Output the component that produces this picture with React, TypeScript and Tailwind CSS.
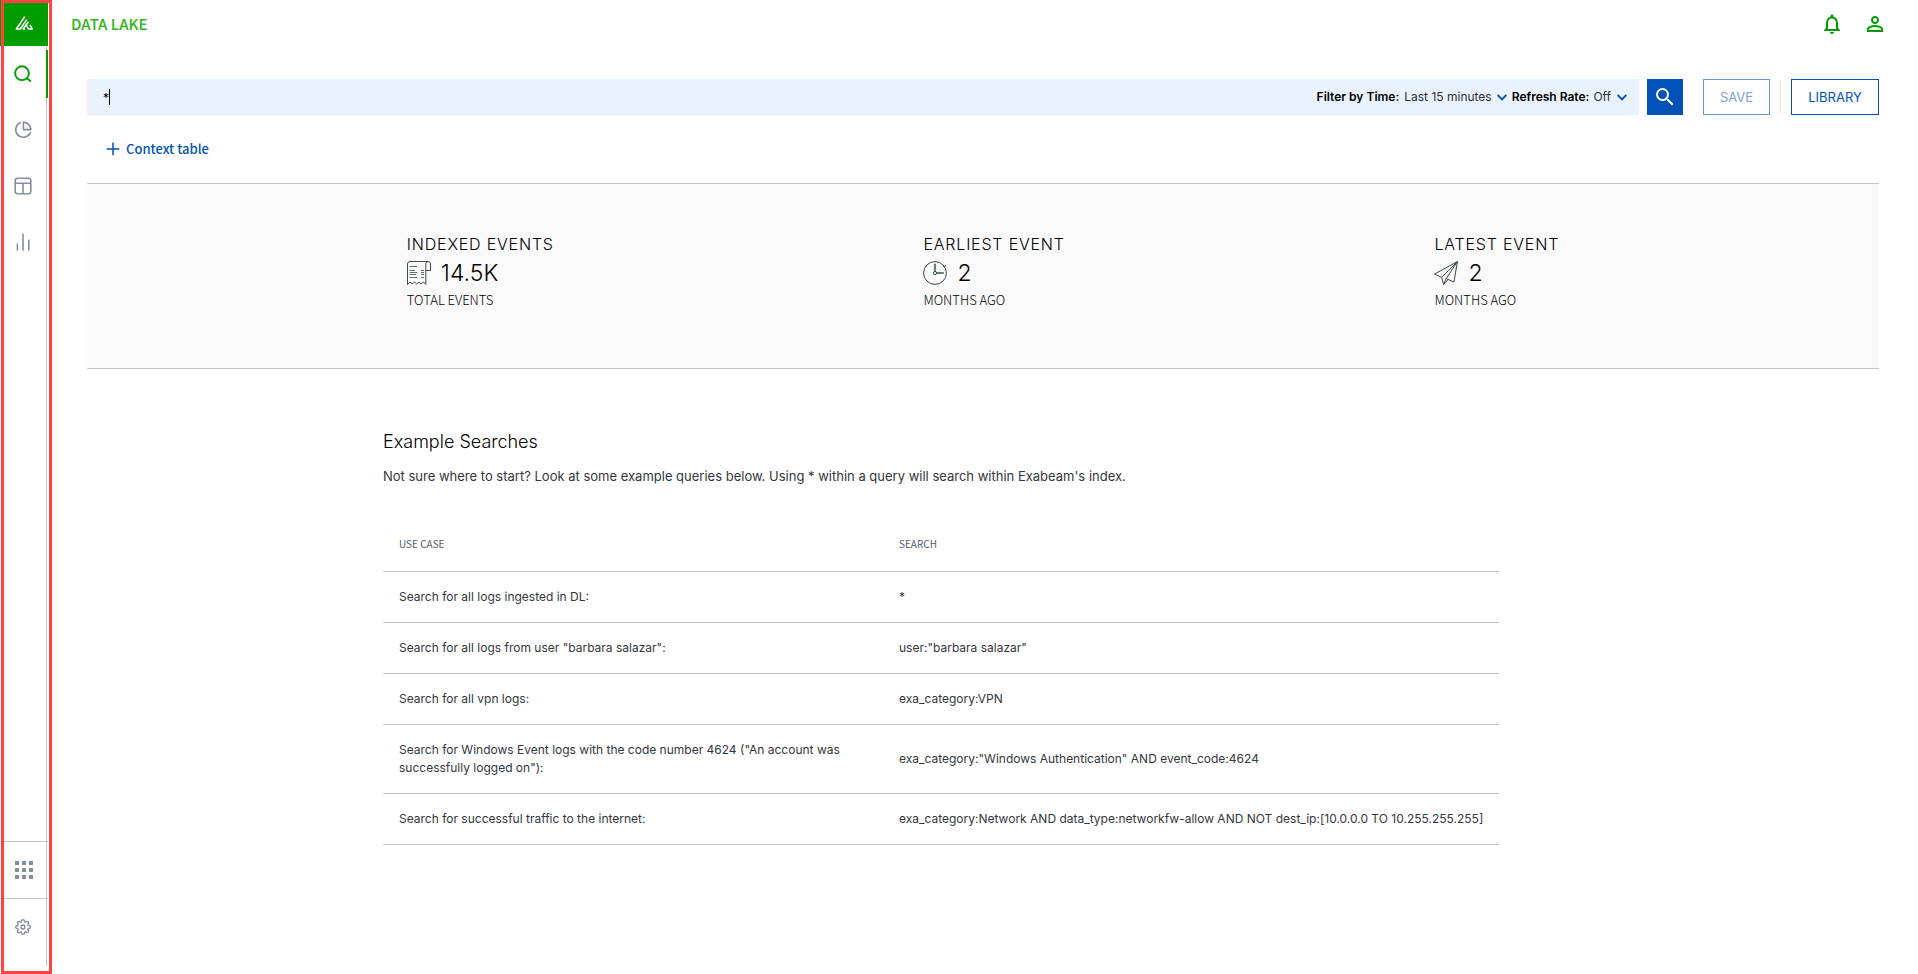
import React from 'react';
import { Plus } from 'lucide-react';
import { FiSettings } from 'react-icons/fi';
import { MdNotificationsNone, MdPersonOutline, MdSearch } from 'react-icons/md';

const LogoIcon = () => (
  <svg viewBox="0 0 18 14" className="w-[18px] h-[14px]" fill="none" stroke="#fff" strokeWidth="1.6" strokeLinejoin="round">
    <path d="M9.8 0.6 L1.4 13 H5.2 L11.8 3.6" />
    <path d="M8 13 L13.4 6 M7.6 13 H10" />
    <path d="M11.6 9.6 L13.4 13 H17.4 L14.8 9" strokeWidth="1.4" />
  </svg>
);

const SearchIcon = () => (
  <svg viewBox="0 0 18 18" className="w-[18px] h-[18px]" fill="none" stroke="currentColor" strokeWidth="1.9" strokeLinecap="round">
    <circle cx="8" cy="8.2" r="6.9" />
    <path d="M12.8 13.2 L16.2 16" />
  </svg>
);

const PieIcon = () => (
  <svg viewBox="0 0 18 18" className="w-[18px] h-[18px]" fill="none" stroke="currentColor" strokeWidth="1.6" strokeLinejoin="round" strokeLinecap="round">
    <path d="M6.2 1.7 A7.6 7.6 0 1 0 16.3 11.6" />
    <path d="M9.4 1.1 A7.6 7.6 0 0 1 16.9 8.6 H9.4 Z" />
  </svg>
);

const LayoutIcon = () => (
  <svg viewBox="0 0 18 18" className="w-[18px] h-[18px]" fill="none" stroke="currentColor" strokeWidth="1.6">
    <rect x="1.2" y="1.2" width="15.6" height="15.6" rx="2.5" />
    <path d="M1.2 6.2 H16.8 M9 6.2 V16.8" />
  </svg>
);

const BarsIcon = () => (
  <svg viewBox="0 0 18 18" className="w-[18px] h-[18px]" fill="none" stroke="currentColor" strokeWidth="1.6" strokeLinecap="round">
    <path d="M3.4 11 V17 M9 1.2 V17 M14.8 7 V17" />
  </svg>
);

const GridIcon = () => (
  <svg viewBox="0 0 18 18" className="w-[18px] h-[18px]" fill="currentColor">
    {[0, 7, 14].map((y) => [0, 7, 14].map((x) => <rect key={`${x}-${y}`} x={x} y={y} width="4" height="4" />))}
  </svg>
);

const ChevronIcon = () => (
  <svg viewBox="0 0 10 7" className="w-[10px] h-[7px]" fill="none" stroke="#0052b9" strokeWidth="1.8">
    <path d="M0.7 1 L5 5.4 L9.3 1" />
  </svg>
);

const ReceiptIcon = () => (
  <svg viewBox="0 0 24 24" className="w-6 h-6" fill="none" stroke="#3f474b">
    <path d="M0.5 23.5 V3 Q0.5 0.5 3 0.5 H21 Q23.5 0.5 23.5 3 V9.5 H18.8 M21 0.5 Q18.8 0.5 18.8 3 V23.5" />
    <path d="M0.5 23.5 L3 21 L5 23 L7.5 21 L9.7 23 L12 21 L14 23 L16.5 21 L18.8 23.5" />
    <path d="M2.5 5.5 H10 M2.5 9.5 H8 M2.5 11.5 H10 M2.5 13.5 H9 M2.5 16.5 H10 M14 9.5 H17 M14 11.5 H17 M14 13.5 H17 M14 16.5 H17" strokeWidth="0.8" />
  </svg>
);

const ClockIcon = () => (
  <svg viewBox="0 0 24 24" className="w-6 h-6" fill="none" stroke="#3f474b">
    <circle cx="12" cy="12" r="11.4" />
    <path d="M22.6 4 L21.8 6 L19.8 5.2" />
    <circle cx="12" cy="12" r="1.6" />
    <path d="M11.4 10.4 V3 H12.6 V10.4 M13.6 11.6 H20.5 V12.4 H13.6" strokeWidth="0.8" />
  </svg>
);

const PlaneIcon = () => (
  <svg viewBox="0 0 24 24" className="w-6 h-6" fill="none" stroke="#3f474b" strokeLinejoin="round">
    <path d="M0.6 13 L23.4 0.6 L20 21 L12.2 17.6 L23.4 0.6 L7.6 16.4 Z" />
    <path d="M7.6 16.4 L9.6 23.4 L12.2 17.6 M9.6 23.4 L14 18.6" />
  </svg>
);

const navItems = [
  { label: 'Search', icon: SearchIcon, active: true },
  { label: 'Reports', icon: PieIcon, active: false },
  { label: 'Dashboards', icon: LayoutIcon, active: false },
  { label: 'Visualize', icon: BarsIcon, active: false },
];

const stats = [
  { title: 'INDEXED EVENTS', value: '14.5K', unit: 'TOTAL EVENTS', icon: ReceiptIcon },
  { title: 'EARLIEST EVENT', value: '2', unit: 'MONTHS AGO', icon: ClockIcon },
  { title: 'LATEST EVENT', value: '2', unit: 'MONTHS AGO', icon: PlaneIcon },
];

const examples = [
  { useCase: 'Search for all logs ingested in DL:', search: '*' },
  { useCase: 'Search for all logs from user "barbara salazar":', search: 'user:"barbara salazar"' },
  { useCase: 'Search for all vpn logs:', search: 'exa_category:VPN' },
  {
    useCase: 'Search for Windows Event logs with the code number 4624 ("An account was successfully logged on"):',
    search: 'exa_category:"Windows Authentication" AND event_code:4624',
  },
  {
    useCase: 'Search for successful traffic to the internet:',
    search: 'exa_category:Network AND data_type:networkfw-allow AND NOT dest_ip:[10.0.0.0 TO 10.255.255.255]',
  },
];

const Sidebar: React.FC = () => (
  <aside className="relative w-[52px] shrink-0 flex flex-col pb-2">
    <a href="#home" aria-label="Home" className="w-12 h-[46px] shrink-0 bg-[#009c00] flex items-center justify-center">
      <LogoIcon />
    </a>
    <nav className="w-[47px] grow flex flex-col border-r border-[#c4c4c4] text-[#868e9c]">
      <div className="flex flex-col gap-2 pt-1">
        {navItems.map((item) => {
          const Icon = item.icon;

          return (
            <a
              key={item.label}
              href={`#${item.label.toLowerCase()}`}
              aria-label={item.label}
              className={
                item.active
                  ? 'w-12 h-12 flex items-center justify-center text-[#009c00] border-r-2 border-[#009c00]'
                  : 'w-[46px] h-12 flex items-center justify-center'
              }
            >
              <Icon />
            </a>
          );
        })}
      </div>
      <div className="mt-auto flex flex-col">
        <a href="#apps" aria-label="Apps" className="w-12 h-[57px] border-t border-[#c4c4c4] flex items-center justify-center">
          <GridIcon />
        </a>
        <a href="#settings" aria-label="Settings" className="w-12 h-[68px] border-t border-[#c4c4c4] flex justify-center pt-5 pr-[2px]">
          <FiSettings className="w-4 h-4" />
        </a>
      </div>
    </nav>
    {/* highlight frame lies over the whole rail */}
    <div className="absolute inset-y-0 left-px right-0 border-3 border-[#ff4343] pointer-events-none" />
  </aside>
);

const TopBar: React.FC = () => (
  <header className="h-12 flex items-center justify-between pl-[19px] pr-[31px]">
    <h1 className="font-['Noto_Sans_CJK_SC',sans-serif] font-medium text-[15px] leading-6 text-[#2fb516]">DATA LAKE</h1>
    <div className="flex items-center gap-[19px] text-[#009c00]">
      <button type="button" aria-label="Notifications">
        <MdNotificationsNone className="w-6 h-6" />
      </button>
      <button type="button" aria-label="Account">
        <MdPersonOutline className="w-6 h-6" />
      </button>
    </div>
  </header>
);

const SearchBar: React.FC = () => (
  <form className="flex items-center h-9" onSubmit={(e) => e.preventDefault()}>
    <div className="grow h-9 flex items-center bg-[#eaf3fd] pl-4 pr-3 text-[12px] text-[#2b2f33]">
      <div className="relative grow flex items-center">
        <input type="text" aria-label="Search query" defaultValue="*" className="w-full h-6 outline-none text-[12px] text-black" />
        <span className="absolute left-[6px] w-px h-4 bg-black" />
      </div>
      <div className="shrink-0 flex items-center">
        <label htmlFor="time" className="font-semibold text-black mr-[5px]">Filter by Time:</label>
        <select id="time" className="appearance-none field-sizing-content outline-none mr-[5px]">
          <option>Last 15 minutes</option>
        </select>
        <ChevronIcon />
        <label htmlFor="refresh" className="font-semibold text-black ml-[5px] mr-1">Refresh Rate:</label>
        <select id="refresh" className="appearance-none field-sizing-content outline-none mr-[6px]">
          <option>Off</option>
        </select>
        <ChevronIcon />
      </div>
    </div>
    <button type="submit" aria-label="Search" className="ml-2 w-9 h-9 bg-[#0052b9] text-white flex items-center justify-center">
      <MdSearch className="w-6 h-6" />
    </button>
    <button type="button" className="ml-5 w-[67px] h-9 pt-px border border-[#6697d5] text-[#7da0d8] text-[13px]">SAVE</button>
    <span className="ml-[10px] w-px h-[34px] bg-[#e3e5e8]" />
    <button type="button" className="ml-[10px] w-[88px] h-9 pt-px border border-[#0052b9] text-[#0052b9] text-[13px]">LIBRARY</button>
  </form>
);

const StatsPanel: React.FC = () => (
  <section className="h-[186px] bg-[#fafafa] border-y border-[#c4c4c4] px-[135px] pt-12 flex items-start justify-around">
    {stats.map((stat) => {
      const Icon = stat.icon;

      return (
        <div key={stat.title} className="flex flex-col text-black">
          <h2 className="text-base leading-6 font-light tracking-wider">{stat.title}</h2>
          <div className="flex items-center gap-[10px] h-[34px]">
            <Icon />
            <span className="text-[23px] font-light">{stat.value}</span>
          </div>
          <div className="font-['Noto_Sans_CJK_SC',sans-serif] font-light text-[13px] leading-5">{stat.unit}</div>
        </div>
      );
    })}
  </section>
);

const ExampleSearches: React.FC = () => (
  <section className="w-full max-w-[1200px] mx-auto pt-[61px] text-[#33373b]">
    <h2 className="text-lg leading-6 font-light text-black">Example Searches</h2>
    <p className="text-[13px] leading-5 mt-3">
      Not sure where to start? Look at some example queries below. Using * within a query will search within Exabeam's index.
    </p>
    <table className="mt-8 text-[12px] leading-[18px] text-left border-collapse">
      <thead>
        <tr className="border-b border-[#c4c4c4] text-[10px] text-[#545b64]">
          <th scope="col" className="w-[500px] h-[53px] px-4 font-normal font-['Noto_Sans_CJK_SC',sans-serif]">USE CASE</th>
          <th scope="col" className="px-4 font-normal font-['Noto_Sans_CJK_SC',sans-serif]">SEARCH</th>
        </tr>
      </thead>
      <tbody>
        {examples.map((row) => (
          <tr key={row.search} className="border-b border-[#c4c4c4]">
            <td className="p-4">{row.useCase}</td>
            <td className="p-4">{row.search}</td>
          </tr>
        ))}
      </tbody>
    </table>
  </section>
);

const App: React.FC = () => {
  return (
    <div className="min-h-screen flex bg-white font-[Inter,sans-serif]">
      <Sidebar />
      <div className="grow min-w-0">
        <TopBar />
        <main className="pl-[35px] pr-[39px] pt-[31px]">
          <SearchBar />
          <button type="button" className="mt-[22px] mb-[22px] ml-4 h-6 flex items-center gap-[3px] text-[#0052b9] text-[13px] font-medium font-['Noto_Sans_CJK_SC',sans-serif]">
            <Plus className="w-5 h-5" strokeWidth={1.8} />
            Context table
          </button>
          <StatsPanel />
          <ExampleSearches />
        </main>
      </div>
    </div>
  );
};

export default App;
